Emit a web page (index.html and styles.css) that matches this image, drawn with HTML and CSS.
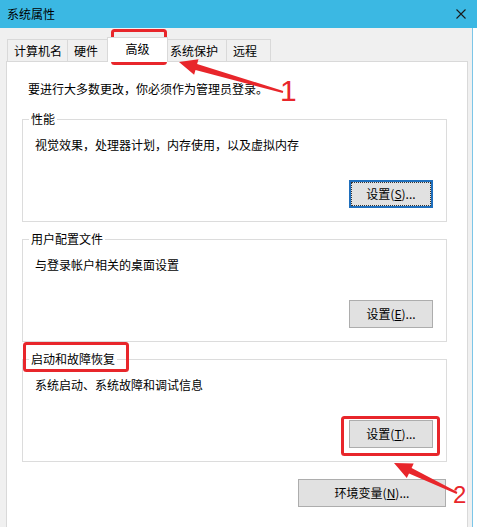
FILE: index.html
```html
<!DOCTYPE html>
<html lang="zh-CN">
<head>
<meta charset="utf-8">
<title>系统属性</title>
<link rel="stylesheet" href="styles.css">
</head>
<body>
<div class="window">
  <div class="titlebar">
    <span class="title">系统属性</span>
    <svg class="close" width="10" height="10" viewBox="0 0 10 10"><path d="M0.5 0.5L9.5 9.5M9.5 0.5L0.5 9.5" stroke="#1a1a1a" stroke-width="1.1" fill="none"/></svg>
  </div>
  <div class="client">
    <div class="tabs">
      <div class="tab t1">计算机名</div>
      <div class="tab t2">硬件</div>
      <div class="tab t3 active">高级</div>
      <div class="tab t4">系统保护</div>
      <div class="tab t5">远程</div>
    </div>
    <div class="panel">
      <p class="note">要进行大多数更改，你必须作为管理员登录。</p>
      <fieldset class="group first">
        <legend>性能</legend>
        <p class="desc">视觉效果，处理器计划，内存使用，以及虚拟内存</p>
        <div class="actions"><button class="btn focus">设置(<u>S</u>)...</button></div>
      </fieldset>
      <fieldset class="group">
        <legend>用户配置文件</legend>
        <p class="desc">与登录帐户相关的桌面设置</p>
        <div class="actions"><button class="btn">设置(<u>E</u>)...</button></div>
      </fieldset>
      <fieldset class="group">
        <legend>启动和故障恢复</legend>
        <p class="desc">系统启动、系统故障和调试信息</p>
        <div class="actions"><button class="btn">设置(<u>T</u>)...</button></div>
      </fieldset>
      <div class="env"><button class="btn wide">环境变量(<u>N</u>)...</button></div>
    </div>
  </div>
  <svg class="annot" width="477" height="527" viewBox="0 0 477 527">
    <g fill="none" stroke="#e8262b" stroke-width="3">
      <rect x="112.5" y="30.5" width="53" height="33" rx="2"/>
      <rect x="24.5" y="343.5" width="103" height="27" rx="2"/>
      <rect x="342.5" y="417.5" width="96" height="37" rx="2"/>
    </g>
    <g fill="#e8262b">
      <polygon points="179,62 198.5,59.3 197.1,64.1 283.3,91 282.7,93 195.5,69.9 194.1,74.7"/>
      <polygon points="394,463 413.7,463.5 411.6,468 457.4,492.1 456.6,493.9 409,473.4 406.8,477.9"/>
      <text class="num n1" x="280" y="101">1</text>
      <text class="num n2" x="453" y="503">2</text>
    </g>
  </svg>
</div>
</body>
</html>
```
FILE: styles.css
```css
* {
  box-sizing: border-box;
}

html,
body {
  margin: 0;
  height: 100%;
}

body {
  background: #ffffff;
  font-family: "Noto Sans CJK SC", "Microsoft YaHei", sans-serif;
  font-size: 12px;
  line-height: 16px;
  color: #000;
  overflow: hidden;
}

.window {
  position: relative;
  width: 477px;
  height: 527px;
  overflow: hidden;
}

.titlebar {
  height: 28px;
  background: #3bb8e3;
  display: flex;
  align-items: center;
  justify-content: space-between;
  padding: 0 11px 0 7px;
}

.title {
  line-height: 16px;
}

.close {
  display: block;
}

.client {
  width: 473px;
  height: 499px;
  background: #f0f0f0;
  border-right: 1px solid #7cc6e8;
  padding-top: 9px;
}

.tabs {
  display: flex;
  align-items: flex-end;
  height: 24px;
  margin-left: 7px;
}

.tab {
  height: 22px;
  border: 1px solid #d9d9d9;
  border-bottom: 0;
  margin-right: -1px;
  background: #f0f0f0;
  display: flex;
  align-items: center;
  padding-left: 6px;
  white-space: nowrap;
}

.t1 { width: 61px; }
.t2 { width: 43px; }
.t4 { width: 62px; padding-left: 4px; }
.t5 { width: 45px; }

.tab.active {
  position: relative;
  z-index: 1;
  width: 61px;
  height: 25px;
  margin-left: -2px;
  margin-right: -3px;
  margin-bottom: -1px;
  background: #ffffff;
  justify-content: center;
  padding: 0 0 3px 0;
}

.panel {
  margin-left: 6px;
  width: 462px;
  height: 480px;
  background: #ffffff;
  border: 1px solid #d9d9d9;
  padding: 19px 0 0 15px;
}

.note {
  margin: 0;
  padding-left: 6px;
}

.group {
  width: 425px;
  min-width: 0;
  margin: 9px 0 0 0;
  padding: 10px 13px 13px 12px;
  border: 1px solid #dcdcdc;
}

.group.first {
  margin-top: 14px;
}

.group legend {
  padding: 0 2px;
  margin-left: -6px;
  line-height: 16px;
}

.desc {
  margin: 0;
}

.actions {
  margin-top: 27px;
  display: flex;
  justify-content: flex-end;
}

.btn {
  width: 84px;
  height: 28px;
  padding: 0;
  background: #e1e1e1;
  border: 1px solid #adadad;
  font-family: inherit;
  font-size: 12px;
  line-height: 16px;
  color: #000;
}

.btn.focus {
  border: 2px solid #1f6fbd;
  outline: 1px dotted #333;
  outline-offset: -3px;
}

.btn.wide {
  width: 148px;
}

.env {
  width: 424px;
  margin-top: 17px;
  display: flex;
  justify-content: flex-end;
}

.annot {
  position: absolute;
  left: 0;
  top: 0;
  pointer-events: none;
}

.num {
  font-family: "Liberation Sans", Arial, sans-serif;
}

.n1 {
  font-size: 30px;
}

.n2 {
  font-size: 24px;
}
```
